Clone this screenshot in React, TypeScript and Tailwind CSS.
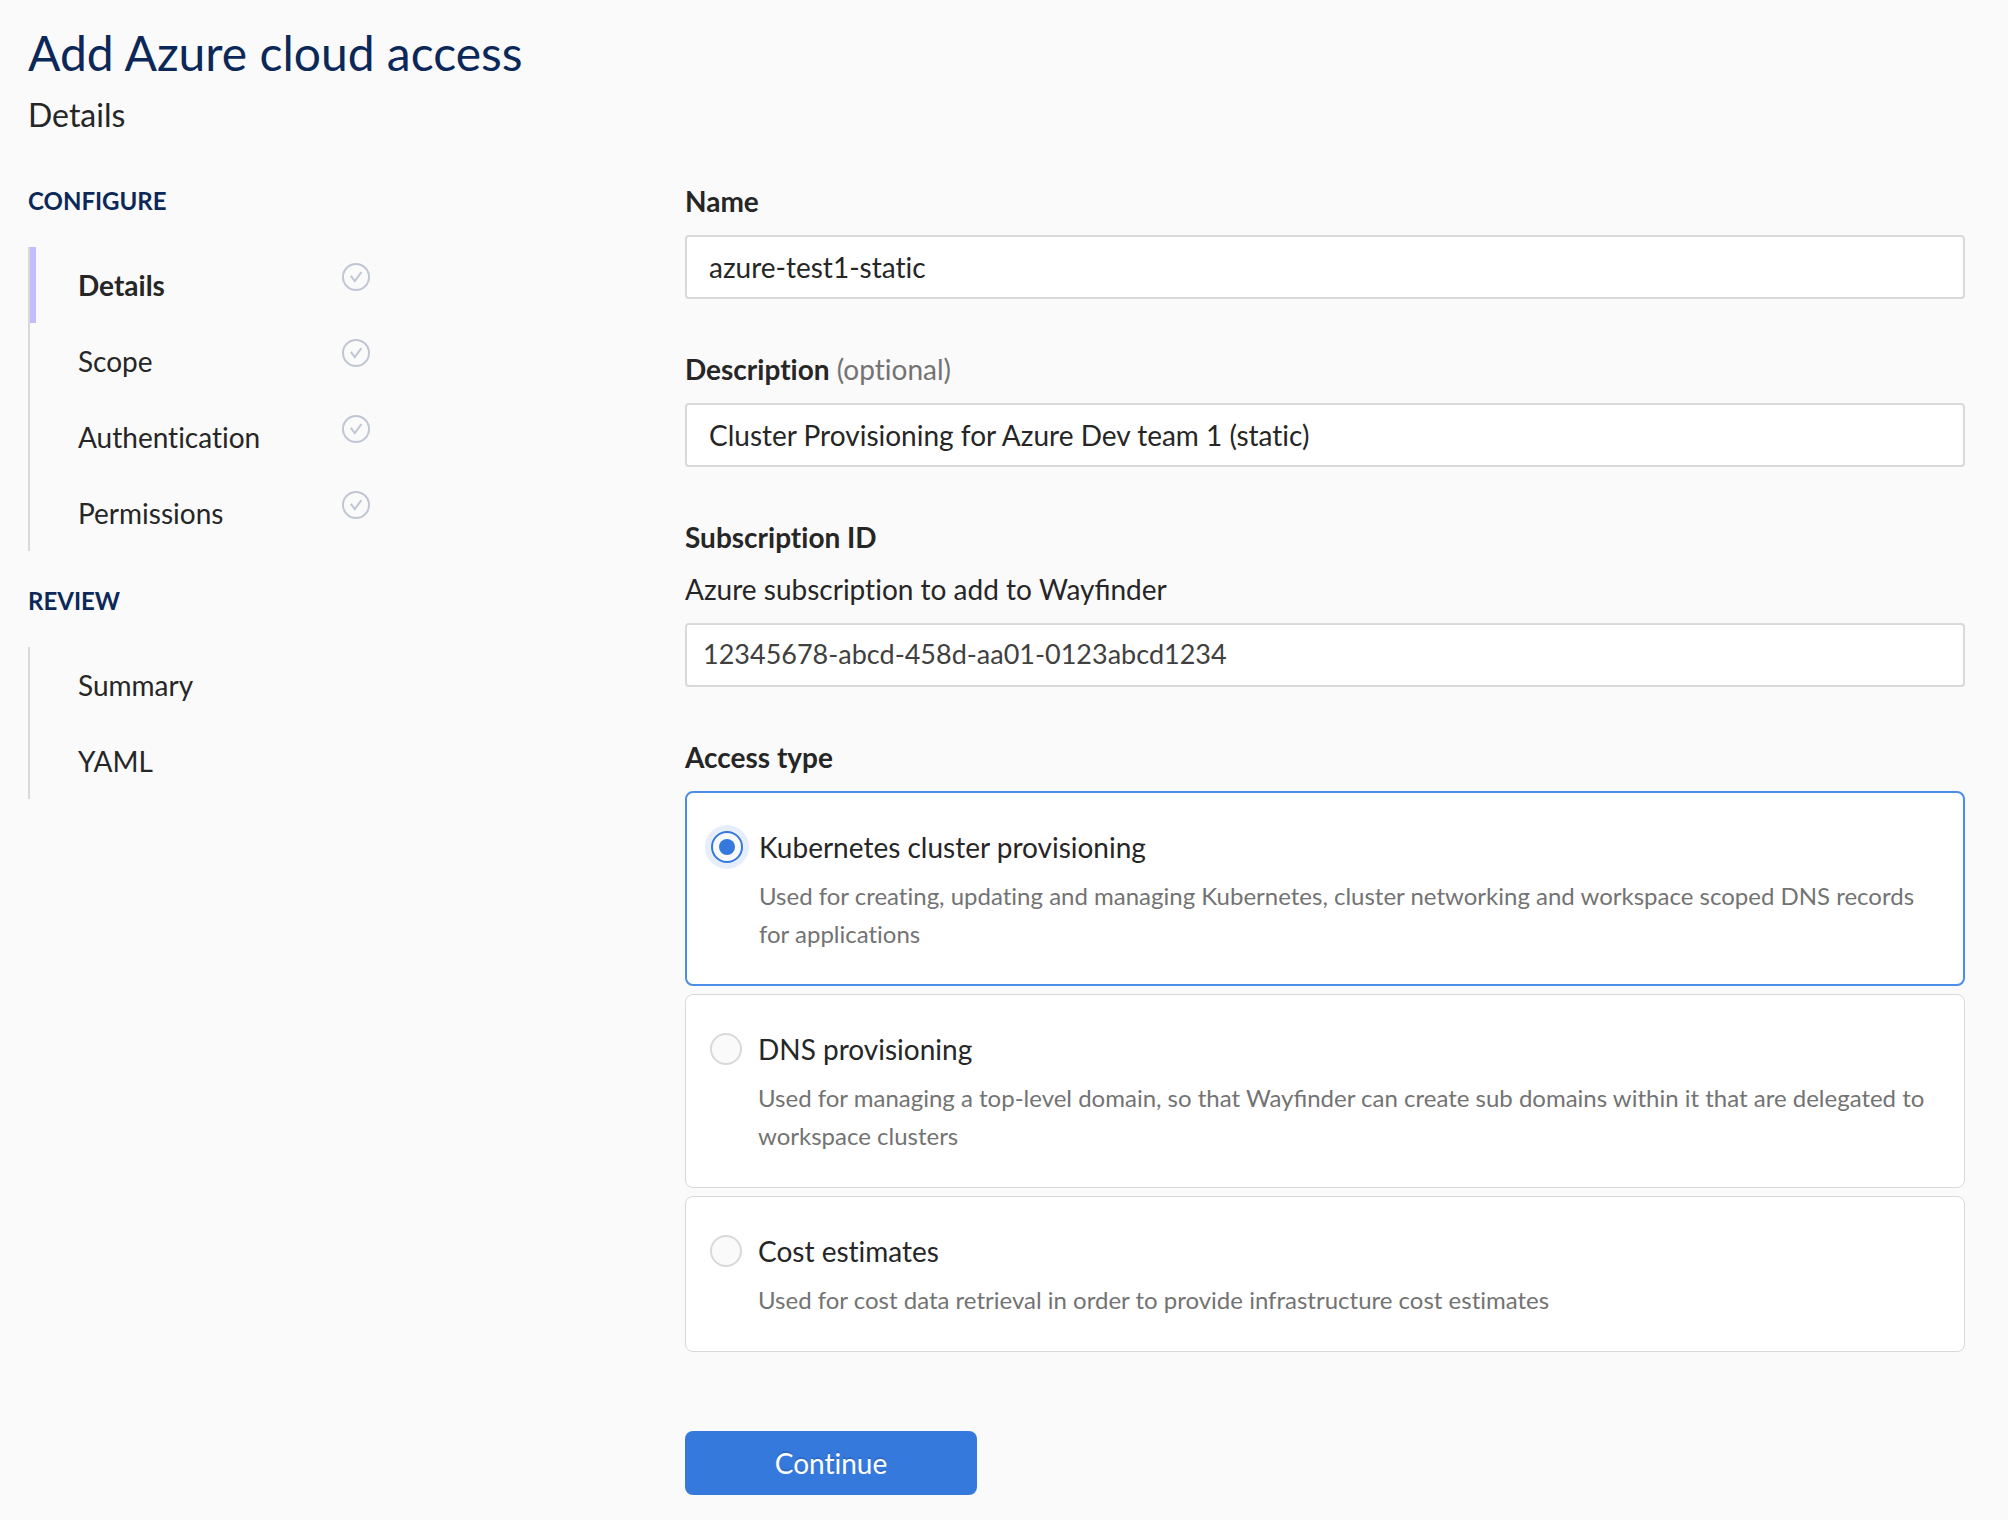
import { useState } from "react";

const configureSteps = ["Details", "Scope", "Authentication", "Permissions"];
const reviewSteps = ["Summary", "YAML"];

const accessTypes = [
  {
    id: "kubernetes",
    title: "Kubernetes cluster provisioning",
    text: "Used for creating, updating and managing Kubernetes, cluster networking and workspace scoped DNS records for applications",
    textClass: "mt-2 block text-2xl/[38px] text-[#737373]",
  },
  {
    id: "dns",
    title: "DNS provisioning",
    text: "Used for managing a top-level domain, so that Wayfinder can create sub domains within it that are delegated to workspace clusters",
    textClass: "mt-2 block text-2xl/[38px] text-[#737373] [font-variant-ligatures:normal]",
  },
  {
    id: "cost",
    title: "Cost estimates",
    text: "Used for cost data retrieval in order to provide infrastructure cost estimates",
    textClass: "mt-2 block text-2xl/[38px] text-[#737373]",
  },
];

function CheckCircle() {
  return (
    <svg viewBox="0 0 28 28" className="size-7 text-[#c0c6d4]" fill="none" stroke="currentColor" aria-hidden="true">
      <circle cx="14" cy="14" r="13" strokeWidth="2" />
      <path d="M8.8 12.8l4 5.2L19.4 9.2" strokeWidth="2" />
    </svg>
  );
}

function StepGroup({ title, steps, current, checks }: { title: string; steps: string[]; current?: string; checks?: boolean }) {
  return (
    <section>
      <h3 className="text-2xl/8 font-bold text-[#0b2859] uppercase">{title}</h3>
      <ul className="mt-[30px] border-l-2 border-[#d9d9d9]">
        {steps.map((step) => {
          const active = step === current;
          return (
            <li
              key={step}
              className={
                active
                  ? "flex h-[76px] items-start border-l-6 border-[#c1bcfb] pl-[42px] font-bold"
                  : "flex h-[76px] items-start pl-12"
              }
            >
              <a href="#" aria-current={active ? "step" : undefined} className="flex-1 pt-4 text-[28px]/11">
                {step}
              </a>
              {checks && (
                <span className="pt-4">
                  <CheckCircle />
                </span>
              )}
            </li>
          );
        })}
      </ul>
    </section>
  );
}

const inputClass = "mt-3 h-16 w-full rounded-[4px] border-2 border-[#d9d9d9] bg-white outline-none";

export default function App() {
  const [selected, setSelected] = useState("kubernetes");

  return (
    <div className="min-h-screen bg-[#fafafa] pt-[23px] pr-[43px] pb-6 pl-7 font-['Lato',sans-serif] text-[28px]/11 text-[#262626] [font-variant-ligatures:none]">
      <header>
        <h1 className="text-5xl/[60px] text-[#0b2859]">Add Azure cloud access</h1>
        <h2 className="mt-2 text-[32px]/12">Details</h2>
      </header>

      <div className="mt-10 grid grid-cols-[657fr_1280fr]">
        <nav aria-label="Steps" className="pt-1.5">
          <div className="flex w-[342px] flex-col gap-[34px]">
            <StepGroup title="Configure" steps={configureSteps} current="Details" checks />
            <StepGroup title="Review" steps={reviewSteps} />
          </div>
        </nav>

        <form className="min-w-0" onSubmit={(e) => e.preventDefault()}>
          <div>
            <label htmlFor="name" className="block font-bold">
              Name
            </label>
            <input id="name" defaultValue="azure-test1-static" className={`${inputClass} px-[22px]`} />
          </div>

          <div className="mt-12">
            <label htmlFor="description" className="block">
              <span className="font-bold">Description</span> <span className="text-[#737373]">(optional)</span>
            </label>
            <input
              id="description"
              defaultValue="Cluster Provisioning for Azure Dev team 1 (static)"
              className={`${inputClass} px-[22px]`}
            />
          </div>

          <div className="mt-12">
            <label htmlFor="subscription" className="block font-bold">
              Subscription ID
            </label>
            <p id="subscription-help" className="mt-2">
              Azure subscription to add to <span className="[font-variant-ligatures:normal]">Wayfinder</span>
            </p>
            <input
              id="subscription"
              aria-describedby="subscription-help"
              defaultValue="12345678-abcd-458d-aa01-0123abcd1234"
              className={`${inputClass} px-4 pb-1 text-[27px] text-[#404040]`}
            />
          </div>

          <fieldset className="mt-12">
            <legend className="font-bold">Access type</legend>
            <div className="mt-3 flex flex-col gap-2">
              {accessTypes.map((type) => {
                const checked = type.id === selected;
                return (
                  <label
                    key={type.id}
                    className={
                      checked
                        ? "flex items-start rounded-lg border-2 border-[#4a8ee8] bg-white pt-8 pr-8 pb-[31px] pl-6"
                        : "flex items-start rounded-lg border border-[#d9d9d9] bg-white py-8 pr-8 pl-6"
                    }
                  >
                    <input
                      type="radio"
                      name="access-type"
                      value={type.id}
                      checked={checked}
                      onChange={() => setSelected(type.id)}
                      aria-labelledby={`${type.id}-title`}
                      aria-describedby={`${type.id}-text`}
                      className="mt-[6px] grid size-8 shrink-0 appearance-none place-items-center rounded-full border-2 border-[#d9d9d9] bg-[#fafafa] outline-none checked:border-[#3579dc] checked:ring-6 checked:ring-[#e6eefc] checked:before:size-4 checked:before:rounded-full checked:before:bg-[#3579dc] checked:before:content-['']"
                    />
                    <span className="ml-4 flex-1">
                      <span id={`${type.id}-title`} className="block">
                        {type.title}
                      </span>
                      <span id={`${type.id}-text`} className={type.textClass}>
                        {type.text}
                      </span>
                    </span>
                  </label>
                );
              })}
            </div>
          </fieldset>

          <button
            type="submit"
            className="mt-[79px] h-16 w-[292px] rounded-lg bg-[#3579dc] text-[28px] text-white [text-shadow:0_-2px_0_rgba(0,0,0,0.12)]"
          >
            Continue
          </button>
        </form>
      </div>
    </div>
  );
}
